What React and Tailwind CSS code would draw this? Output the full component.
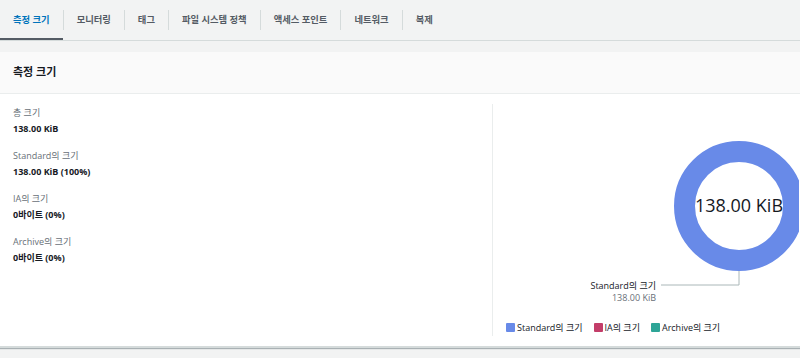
import React from 'react';

const tabs = ['측정 크기', '모니터링', '태그', '파일 시스템 정책', '액세스 포인트', '네트워크', '복제'];

const metrics = [
    { label: '총 크기', value: '138.00 KiB' },
    { label: 'Standard의 크기', value: '138.00 KiB (100%)' },
    { label: 'IA의 크기', value: '0바이트 (0%)' },
    { label: 'Archive의 크기', value: '0바이트 (0%)' },
];

const legend = [
    { label: 'Standard의 크기', color: 'bg-[#688ae8]' },
    { label: 'IA의 크기', color: 'bg-[#c33d69]' },
    { label: 'Archive의 크기', color: 'bg-[#2ea597]' },
];

const font = { fontFamily: '"Open Sans", "Noto Sans CJK KR", sans-serif' };

const App = () => {
    return (
        <div className="w-[800px] h-[358px] overflow-hidden bg-[#f2f3f3] text-[#16191f] font-['Open_Sans','Noto_Sans_CJK_KR',sans-serif]">
            {/* Tabs */}
            <div className="h-[41px] flex items-stretch border-b border-[#d5dbdb]">
                {tabs.map((tab, i) => (
                    <div key={tab} className="flex items-center">
                        <div
                            className={`h-full flex items-center px-[13px] text-[9.3px] font-bold ${
                                i === 0 ? 'text-[#0073bb] border-b-2 border-[#545b64] pt-[2px]' : 'text-[#545b64]'
                            }`}
                        >
                            {tab}
                        </div>
                        {i < tabs.length - 1 && <div className="w-px h-[20px] bg-[#d5dbdb]" />}
                    </div>
                ))}
            </div>

            {/* Panel */}
            <div className="mt-[11px] shadow-[0_1px_1px_rgba(0,28,36,0.3)]">
                <div className="h-[42px] bg-[#fafafa] border-b border-[#eaeded] flex items-center px-[13px]">
                    <h2 className="text-[11px] font-bold text-[#16191f]">측정 크기</h2>
                </div>
                <div className="h-[254px] bg-white border-b-2 border-[#d5dbdb] flex py-[10px]">
                    <div className="w-[493px] border-r border-[#eaeded] px-[13px] pt-[2px] flex flex-col gap-[15px]">
                        {metrics.map((m) => (
                            <div key={m.label} className="flex flex-col gap-[4px]">
                                <span className="text-[9px] leading-[13px] text-[#687078]">{m.label}</span>
                                <span className="text-[9px] leading-[11px] font-bold text-[#16191f]">{m.value}</span>
                            </div>
                        ))}
                    </div>
                    <div className="flex-1 flex flex-col">
                        <svg width="306" height="206" viewBox="0 0 306 206" style={font}>
                            <circle cx="246" cy="102" r="54.5" fill="none" stroke="#688ae8" strokeWidth="21" />
                            <text x="246" y="108" textAnchor="middle" fontSize="18" fill="#16191f">
                                138.00 KiB
                            </text>
                            <polyline points="246,167 246,181 168,181" fill="none" stroke="#aab7b8" strokeWidth="1" />
                            <text x="163" y="184.5" textAnchor="end" fontSize="9" fill="#16191f">
                                Standard의 크기
                            </text>
                            <text x="163" y="196.5" textAnchor="end" fontSize="9" fill="#687078">
                                138.00 KiB
                            </text>
                        </svg>
                        <div className="mt-[11px] ml-[13px] flex items-center gap-[11px]">
                            {legend.map((l) => (
                                <div key={l.label} className="flex items-center gap-[2px]">
                                    <span className={`w-[9px] h-[9px] rounded-[1px] ${l.color}`} />
                                    <span className="text-[9px] text-[#16191f]">{l.label}</span>
                                </div>
                            ))}
                        </div>
                    </div>
                </div>
            </div>
        </div>
    );
};

export default App;
